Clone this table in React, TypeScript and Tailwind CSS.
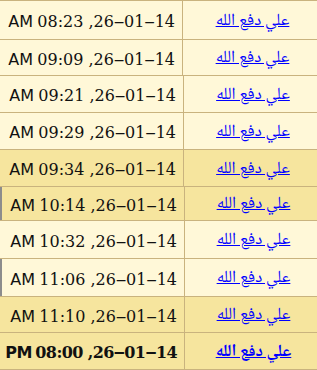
const rows = [
  { time: "08:23", ampm: "AM", dark: false, h: "h-[39px]", w: "w-[183px]" },
  { time: "09:09", ampm: "AM", dark: false, h: "h-[36px]", w: "w-[183px]" },
  { time: "09:21", ampm: "AM", dark: false, h: "h-[37px]", w: "w-[184px]" },
  { time: "09:29", ampm: "AM", dark: false, h: "h-[37px]", w: "w-[184px]" },
  { time: "09:34", ampm: "AM", dark: true, h: "h-[37px]", w: "w-[184px]" },
  { time: "10:14", ampm: "AM", dark: true, h: "h-[34px]", w: "w-[185px]", mark: true },
  { time: "10:32", ampm: "AM", dark: false, h: "h-[38px]", w: "w-[185px]" },
  { time: "11:06", ampm: "AM", dark: false, h: "h-[38px]", w: "w-[185px]", mark: true },
  { time: "11:10", ampm: "AM", dark: true, h: "h-[36px]", w: "w-[185px]" },
  { time: "08:00", ampm: "PM", dark: true, h: "h-[37px]", w: "w-[185px]", bold: true },
];

const arabic = '"Noto Naskh Arabic", "Noto Sans Arabic", "DejaVu Sans", sans-serif';

export default function App() {
  return (
    <div className="w-[317px] h-[370px] overflow-hidden bg-[#fff8d8]">
      <div className="border-t border-[#c9b37e]">
        {rows.map((r, i) => (
          <div
            key={i}
            className={`flex ${r.h} border-b border-[#c9b37e] ${r.dark ? "bg-[#f6e59e]" : "bg-[#fff8d8]"} ${r.bold ? "font-bold" : ""}`}
          >
            {r.mark && <div className="w-[2px] shrink-0 bg-[#8c8c8c] relative z-10" />}
            {/* date, already in right-to-left visual order */}
            <div
              className={`${r.w} shrink-0 flex items-center justify-end pr-[7px] pt-[3px] whitespace-nowrap text-[16px] text-[#111] border-r border-[#c9b37e] ${r.mark ? "-ml-[2px]" : ""} ${r.bold ? "tracking-[-0.6px]" : ""}`}
            >
              <span>
                <span style={{ fontFamily: '"DejaVu Sans", sans-serif' }}>{r.ampm}</span>{" "}
                <span style={{ fontFamily: '"DejaVu Serif", serif' }}>{r.time} ,26‒01‒14</span>
              </span>
            </div>
            {/* name */}
            <div className="flex-1 flex items-center justify-center pl-[5px]">
              <a
                href="#"
                dir="rtl"
                className="text-[#0000ff] underline text-[17px] leading-none pt-[2px]"
                style={{ fontFamily: arabic }}
              >
                علي دفع الله
              </a>
            </div>
          </div>
        ))}
      </div>
    </div>
  );
}
